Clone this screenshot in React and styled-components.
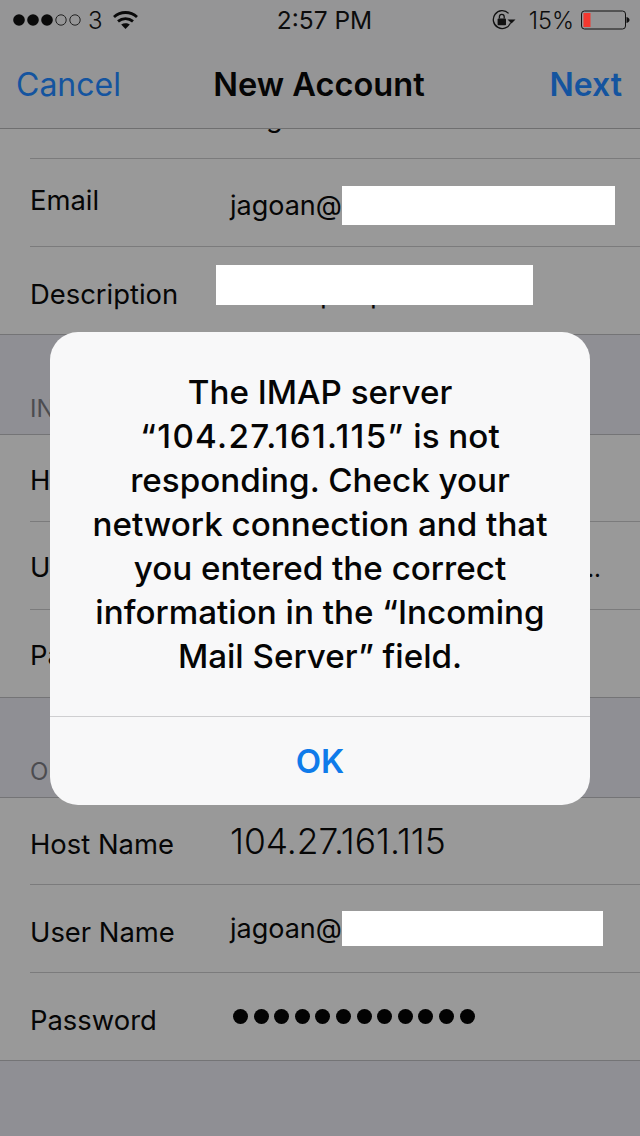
import React from "react";
import styled, { createGlobalStyle } from "styled-components";

const Global = createGlobalStyle`
	html, body {
		margin: 0;
		padding: 0;
		background: #8f8f94;
	}
	body {
		font-family: Inter, "Noto Sans", "Liberation Sans", sans-serif;
	}
`;

// moves flex-centred text up or down by adding padding on one side only
const nudge = (n = 0) => `
	padding-top: ${Math.max(n * 2, 0)}px;
	padding-bottom: ${Math.max(-n * 2, 0)}px;
`;

const Screen = styled.div`
	position: relative;
	width: 640px;
	height: 1136px;
	overflow: hidden;
	background: #8f8f94;
	color: #060606;
`;

const Header = styled.header`
	height: 129px;
	box-sizing: border-box;
	background: #959596;
	border-bottom: 1px solid #6f6f70;
`;

const StatusBar = styled.div`
	display: grid;
	grid-template-columns: 1fr auto 1fr;
	align-items: center;
	height: 40px;
	padding: 0 9px 0 13px;
	font-size: 24px;
	color: #0c0c0c;
`;

const StatusLeft = styled.div`
	display: flex;
	align-items: center;
`;

const StatusRight = styled.div`
	display: flex;
	align-items: center;
	justify-content: flex-end;
`;

const Carrier = styled.span`
	margin: 0 10px 0 7px;
	font-weight: 300;
`;

const Clock = styled.span`
	padding-left: 5px;
	font-size: 24.5px;
	font-weight: 400;
`;

const Percent = styled.span`
	margin: 0 7px 0 13px;
	font-size: 23.5px;
	font-weight: 300;
`;

const NavBar = styled.nav`
	display: grid;
	grid-template-columns: 1fr auto 1fr;
	align-items: center;
	height: 88px;
	padding: 0 18px 0 16px;
	box-sizing: border-box;
	font-size: 32px;
`;

const NavAction = styled.span`
	color: #14549f;
	font-weight: ${(props) => (props.$bold ? 600 : 400)};
	text-align: ${(props) => (props.$right ? "right" : "left")};
`;

const NavTitle = styled.span`
	font-size: 32.6px;
	font-weight: 600;
	color: #050505;
`;

const Group = styled.section`
	background: #999999;
	border-bottom: 1px solid #747476;
`;

const Row = styled.div`
	display: flex;
	align-items: center;
	height: ${(props) => props.$height || 88}px;
	box-sizing: border-box;
	margin-left: 30px;
	border-bottom: ${(props) => (props.$last ? "none" : "1px solid #7b7b7c")};
	overflow: hidden;
	font-size: 27.4px;
`;

const PeekRow = styled(Row)`
	align-items: flex-start;
`;

const Label = styled.span`
	flex: 0 0 200px;
	white-space: nowrap;
	${(props) => nudge(props.$nudge)}
`;

const Value = styled.span`
	display: flex;
	align-items: center;
	white-space: nowrap;
	font-size: ${(props) => props.$size || 27}px;
	font-weight: ${(props) => props.$weight || 400};
	${(props) => nudge(props.$nudge)}
`;

const PeekValue = styled(Value)`
	margin-top: -28px;
	padding-left: 36px;
`;

const Redacted = styled.span`
	display: block;
	width: ${(props) => props.$width}px;
	height: ${(props) => props.$height}px;
	background: #ffffff;
`;

// white box painted over the text of the field, its descenders still show below
const Masked = styled.span`
	position: relative;
	display: block;
	width: 317px;
	height: 40px;
	margin-left: -14px;
`;

const MaskedText = styled.span`
	position: absolute;
	left: 104px;
	top: 14px;
	line-height: 28px;
	font-size: 28px;
	word-spacing: 25px;
`;

const MaskCover = styled.span`
	position: absolute;
	inset: 0;
	background: #ffffff;
`;

const Overflow = styled.span`
	margin-left: auto;
	margin-right: 39px;
	padding-top: 6px;
	font-size: 24px;
`;

const Gap = styled.div`
	height: 100px;
	box-sizing: border-box;
	padding-left: 30px;
	border-bottom: 1px solid #747476;
	display: flex;
	align-items: flex-end;
`;

const GapLabel = styled.span`
	padding-bottom: 11px;
	font-size: 24px;
	color: #4c4c50;
`;

const Dots = styled.div`
	display: flex;
	gap: 5.6px;
	margin-left: 3px;
`;

const Dot = styled.span`
	width: 15px;
	height: 15px;
	border-radius: 50%;
	background: #030303;
`;

const Alert = styled.div`
	position: absolute;
	left: 50px;
	top: 332px;
	width: 540px;
	height: 473px;
	border-radius: 28px;
	background: #f8f8f9;
	overflow: hidden;
	display: flex;
	flex-direction: column;
`;

const Message = styled.p`
	margin: 0;
	height: 385px;
	box-sizing: border-box;
	padding-top: 38px;
	border-bottom: 1px solid #cfcfd1;
	text-align: center;
	white-space: pre-line;
	font-size: 33.2px;
	line-height: 44px;
	font-weight: 500;
	color: #050505;
`;

const Address = styled.span`
	letter-spacing: 1.3px;
`;

const AlertButton = styled.button`
	flex: 1;
	border: 0;
	padding: 0;
	background: transparent;
	font-family: inherit;
	font-size: 33px;
	font-weight: 600;
	color: #0f7bea;
`;

const SignalDots = () => (
	<svg width="68" height="20" viewBox="0 0 68 20">
		{[0, 1, 2].map((i) => (
			<circle key={i} cx={6 + i * 14} cy="10" r="5.8" fill="#0a0a0a" />
		))}
		{[3, 4].map((i) => (
			<circle key={i} cx={6 + i * 14} cy="10" r="5.2" fill="none" stroke="#222" strokeWidth="1" />
		))}
	</svg>
);

const Wifi = () => (
	<svg width="25" height="20" viewBox="0 0 25 20">
		<path d="M1 7C7.5 1 17.5 1 24 7" fill="none" stroke="#0a0a0a" strokeWidth="2.8" />
		<path d="M5 11.4C9.4 7.6 15.6 7.6 20 11.4" fill="none" stroke="#0a0a0a" strokeWidth="2.8" />
		<path d="M12.5 19L8.2 14.6C10.8 12.7 14.2 12.7 16.8 14.6Z" fill="#0a0a0a" />
	</svg>
);

const RotationLock = () => (
	<svg width="24" height="20" viewBox="0 0 24 20">
		<path d="M18.6 12.6A8.9 8.9 0 1 1 16.6 3.4" fill="none" stroke="#111" strokeWidth="1.3" />
		<path d="M15.5 9.4L23.5 9.4L19.5 13.4Z" fill="#111" />
		<rect x="5.6" y="8.6" width="8.4" height="6.6" rx="0.8" fill="#111" />
		<path d="M7.4 8.6V6.8A2.4 2.4 0 0 1 12.2 6.8V8.6" fill="none" stroke="#111" strokeWidth="1.3" />
	</svg>
);

const Battery = () => (
	<svg width="50" height="20" viewBox="0 0 50 20">
		<rect x="0.5" y="1" width="44" height="18" rx="3" fill="none" stroke="#111" strokeWidth="1" />
		<rect x="2.5" y="3" width="7" height="14" fill="#f4382f" />
		<path d="M45.5 7C47.5 7.5 48.5 8.6 48.5 10C48.5 11.4 47.5 12.5 45.5 13Z" fill="#111" />
	</svg>
);

const PASSWORD_DOTS = Array.from({ length: 12 });

const MESSAGE_REST = `responding. Check your
network connection and that
you entered the correct
information in the “Incoming
Mail Server” field.`;

export default function App() {
	return (
		<Screen>
			<Global />
			<Header>
				<StatusBar>
					<StatusLeft>
						<SignalDots />
						<Carrier>3</Carrier>
						<Wifi />
					</StatusLeft>
					<Clock>2:57 PM</Clock>
					<StatusRight>
						<RotationLock />
						<Percent>15%</Percent>
						<Battery />
					</StatusRight>
				</StatusBar>
				<NavBar>
					<NavAction>Cancel</NavAction>
					<NavTitle>New Account</NavTitle>
					<NavAction $bold $right>
						Next
					</NavAction>
				</NavBar>
			</Header>

			<Group>
				<PeekRow $height={30}>
					<Label />
					<PeekValue>g</PeekValue>
				</PeekRow>
				<Row>
					<Label $nudge={-2.5}>Email</Label>
					<Value $nudge={3}>
						jagoan@
						<Redacted $width={273} $height={39} />
					</Value>
				</Row>
				<Row $height={87} $last>
					<Label $nudge={3.5}>Description</Label>
					<Value $nudge={-5.5}>
						<Masked>
							<MaskedText>p p</MaskedText>
							<MaskCover />
						</Masked>
					</Value>
				</Row>
			</Group>

			<Gap>
				<GapLabel>INCOMING MAIL SERVER</GapLabel>
			</Gap>

			<Group>
				<Row $height={87}>
					<Label $nudge={1.5}>Host Name</Label>
				</Row>
				<Row>
					<Label $nudge={1.5}>User Name</Label>
					<Overflow>...</Overflow>
				</Row>
				<Row $height={87} $last>
					<Label $nudge={1.5}>Password</Label>
				</Row>
			</Group>

			<Gap>
				<GapLabel>OUTGOING MAIL SERVER</GapLabel>
			</Gap>

			<Group>
				<Row $height={87}>
					<Label $nudge={2.5}>Host Name</Label>
					<Value $size={35.4} $weight={300}>
						104.27.161.115
					</Value>
				</Row>
				<Row>
					<Label $nudge={3.5}>User Name</Label>
					<Value>
						jagoan@
						<Redacted $width={261} $height={35} />
					</Value>
				</Row>
				<Row $height={87} $last>
					<Label $nudge={3.5}>Password</Label>
					<Dots>
						{PASSWORD_DOTS.map((_, i) => (
							<Dot key={i} />
						))}
					</Dots>
				</Row>
			</Group>

			<Alert>
				<Message>
					The IMAP server
					{"\n"}
					<Address>“104.27.161.115”</Address> is not
					{"\n"}
					{MESSAGE_REST}
				</Message>
				<AlertButton>OK</AlertButton>
			</Alert>
		</Screen>
	);
}
